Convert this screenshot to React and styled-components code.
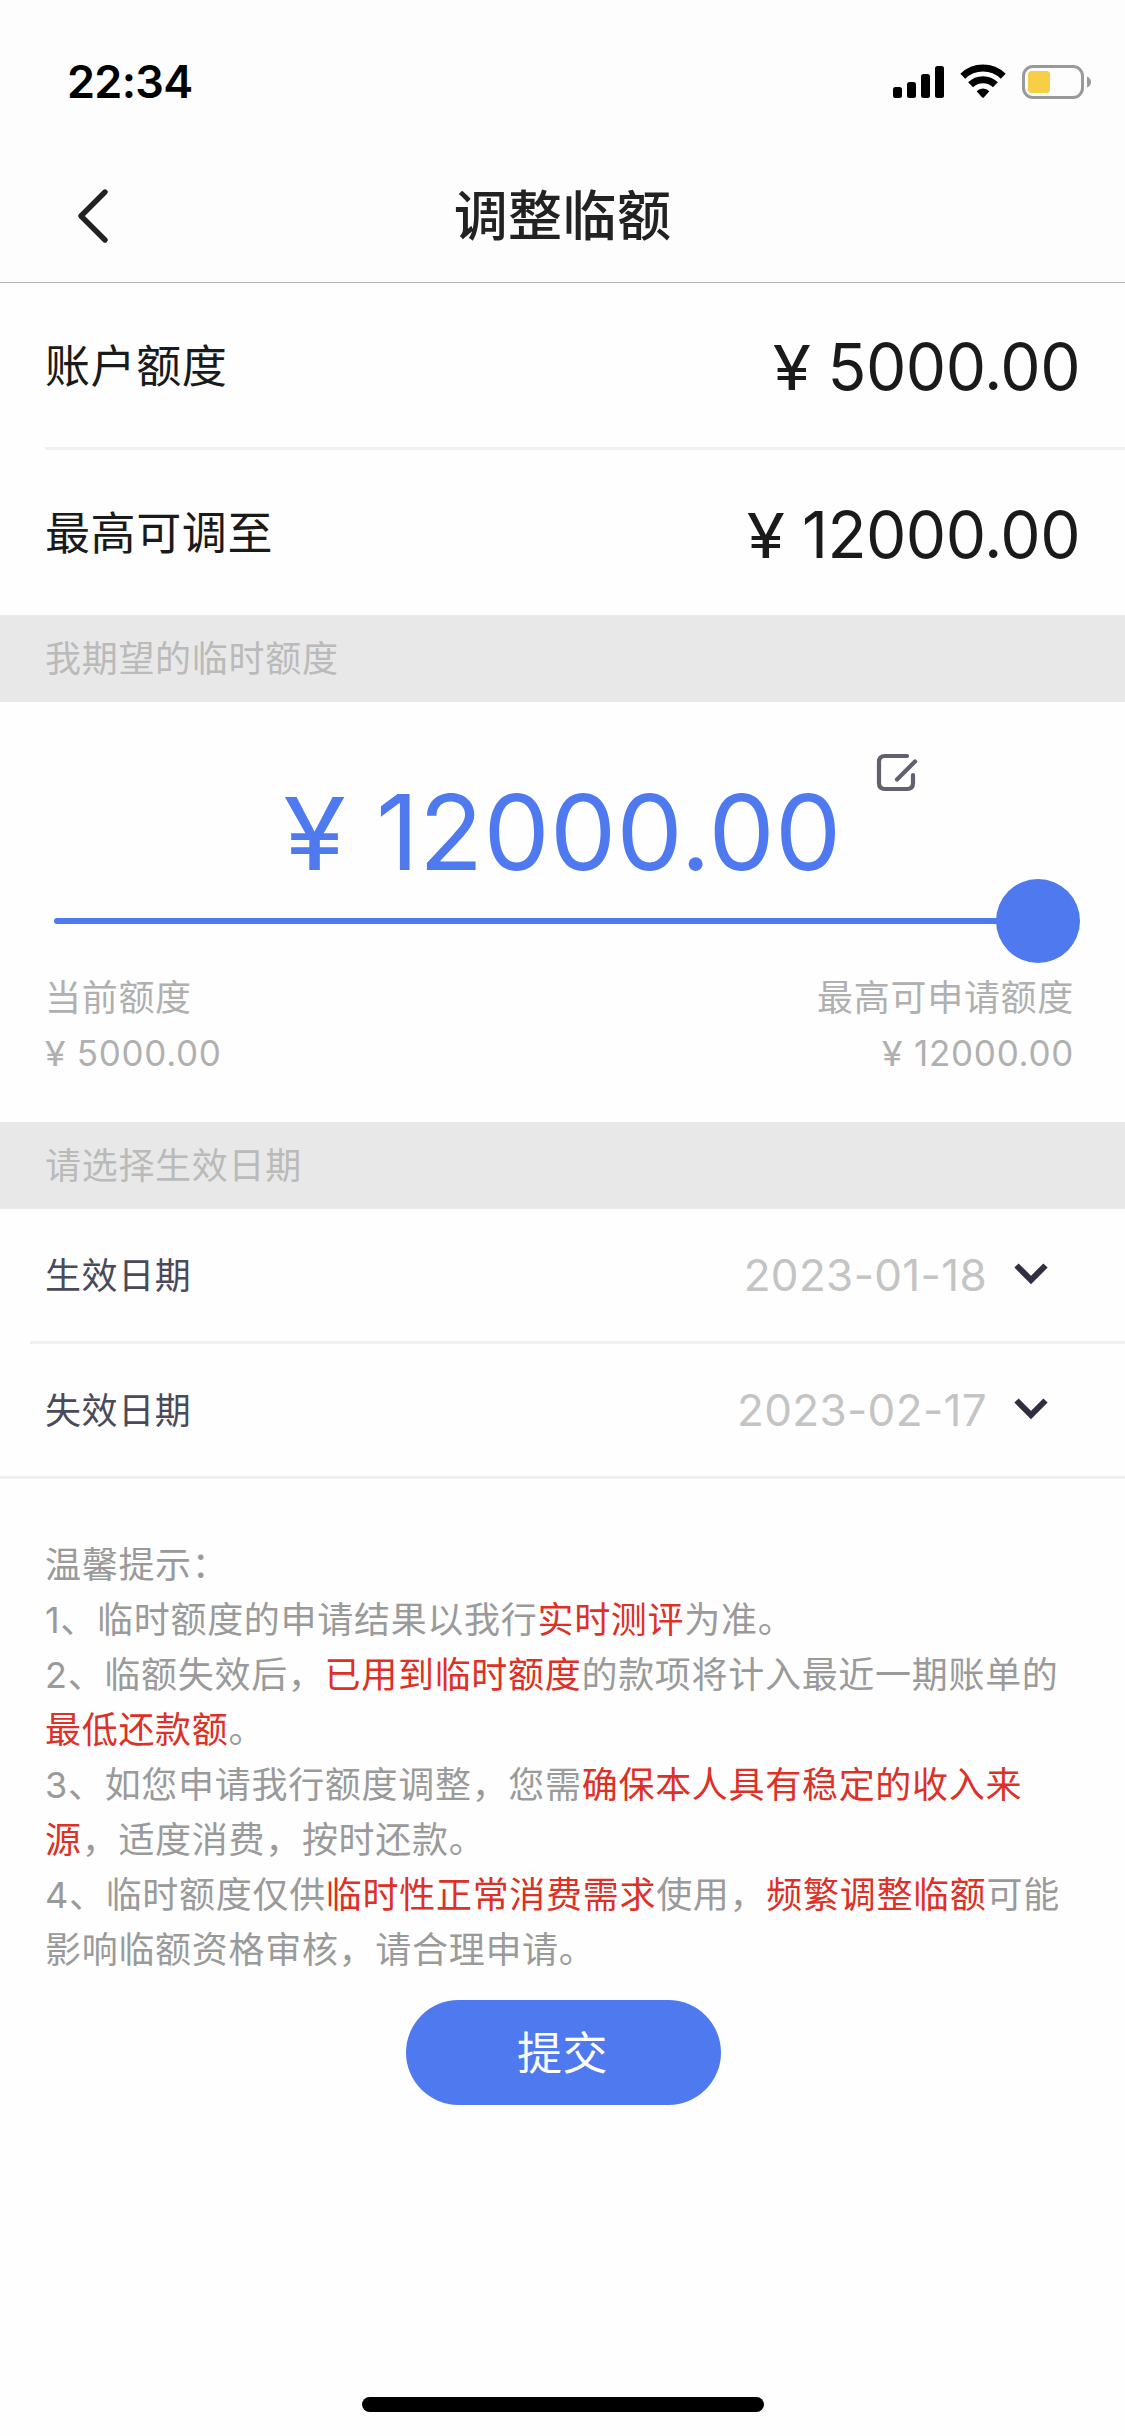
import React from "react";
import styled, { createGlobalStyle } from "styled-components";

const GlobalStyle = createGlobalStyle`
  * {
    box-sizing: border-box;
  }

  body {
    margin: 0;
    background: #fefefe;
    font-family: Inter, "Noto Sans CJK SC", sans-serif;
  }
`;

const Page = styled.div`
  display: flex;
  flex-direction: column;
  width: 1125px;
  height: 2436px;
  overflow: hidden;
`;

const StatusBar = styled.div`
  display: flex;
  align-items: center;
  justify-content: space-between;
  height: 132px;
  padding: 32px 33px 0 67px;
  background: #fdfdfd;
`;

const Time = styled.span`
  font-size: 45px;
  font-weight: 600;
  line-height: 54px;
  letter-spacing: -0.7px;
  color: #000;
`;

const NavBar = styled.header`
  display: grid;
  grid-template-columns: 160px 1fr 160px;
  align-items: center;
  height: 151px;
  padding-top: 18px;
  border-bottom: 1px solid #b2b2b2;
  background: #fdfdfd;
`;

const BackButton = styled.button`
  display: flex;
  width: 34px;
  margin-left: 76px;
  padding: 0;
  border: none;
  background: none;
`;

const Title = styled.h1`
  margin: 0;
  padding-top: 2px;
  font-size: 54px;
  font-weight: 500;
  line-height: 72px;
  letter-spacing: 0.4px;
  text-align: center;
  color: #222;
`;

const LimitRow = styled.div`
  display: flex;
  align-items: center;
  justify-content: space-between;
  height: ${({ $divider }) => ($divider ? "167px" : "165px")};
  margin-left: 45px;
  padding-right: 45px;
  border-bottom: ${({ $divider }) => ($divider ? "3px solid #f0f0f0" : "none")};
`;

const LimitLabel = styled.span`
  padding-bottom: 4px;
  font-size: 45px;
  letter-spacing: 0.6px;
  color: #1a1a1a;
`;

const LimitValue = styled.span`
  padding-top: 3px;
  font-size: 64px;
  letter-spacing: -0.5px;
  color: #1a1a1a;
`;

/* the currency sign is a little shorter and wider than the digits */
const Yen = styled.span`
  display: inline-block;
  margin-right: 0.03em;
  font-size: 0.96em;
  transform: scaleX(1.13);
`;

const SectionTitle = styled.div`
  display: flex;
  align-items: center;
  height: 87px;
  padding: 0 0 5px 45px;
  font-size: 36px;
  letter-spacing: 0.7px;
  color: #bababa;
  background: #e8e8e8;
`;

const Adjust = styled.section`
  display: flex;
  flex-direction: column;
  height: 420px;
  padding: 50px 45px 0;
`;

const Expected = styled.div`
  display: grid;
  grid-template-columns: 1fr auto 1fr;
  height: 127px;
`;

const ExpectedValue = styled.div`
  grid-column: 2;
  padding: 17px 0 0 4px;
  font-size: 105px;
  line-height: 125px;
  letter-spacing: 0.35px;
  white-space: nowrap;
  color: #4f79ef;
`;

const EditButton = styled.button`
  display: flex;
  align-self: start;
  margin-left: 34px;
  padding: 0;
  border: none;
  background: none;
`;

const Slider = styled.div`
  display: flex;
  align-items: center;
  height: 84px;
  padding-left: 9px;
`;

const Track = styled.div`
  flex: 1;
  height: 6px;
  margin-right: -10px;
  border-radius: 3px;
  background: #4f79ef;
`;

const Knob = styled.div`
  width: 84px;
  height: 84px;
  border-radius: 50%;
  background: #4f79ef;
`;

const Range = styled.div`
  display: flex;
  justify-content: space-between;
  padding: 8px 6px 0 0;
`;

const RangeEnd = styled.div`
  display: flex;
  flex-direction: column;
  text-align: ${({ $right }) => ($right ? "right" : "left")};
  font-size: 36px;
  line-height: 55px;
  letter-spacing: 0.7px;
  color: #b0b0b0;
`;

const RangeValue = styled.span`
  padding-left: 1px;
  font-size: 35px;
`;

const DateRow = styled.div`
  display: flex;
  align-items: center;
  justify-content: space-between;
  height: 135px;
  margin-left: ${({ $last }) => ($last ? "0" : "30px")};
  padding: 0 77px 0 ${({ $last }) => ($last ? "45px" : "15px")};
  border-bottom: 3px solid #f0f0f0;
`;

const DateLabel = styled.span`
  padding-bottom: 4px;
  font-size: 36px;
  letter-spacing: 0.6px;
  color: #4a4a5a;
`;

const DatePicker = styled.div`
  display: flex;
  align-items: center;
  gap: 27px;
  font-size: 44px;
  letter-spacing: 0.35px;
  color: #c4c4c4;

  svg {
    margin-bottom: 3px;
  }
`;

const Tips = styled.section`
  padding: 59px 45px 0;
  font-size: 36px;
  line-height: 55px;
  letter-spacing: 0.7px;
  color: #9a9a9a;

  p {
    margin: 0;
  }

  em {
    font-style: normal;
    color: #dd3026;
  }
`;

const SubmitButton = styled.button`
  align-self: center;
  width: 315px;
  height: 105px;
  margin: 22px 0 0 2px;
  padding: 0 2px 4px 0;
  border: none;
  border-radius: 53px;
  font-family: inherit;
  font-size: 45px;
  letter-spacing: 0.6px;
  color: #fff;
  background: #4f79ef;
`;

const HomeIndicator = styled.div`
  align-self: center;
  width: 402px;
  height: 15px;
  margin: auto 0 24px;
  border-radius: 8px;
  background: #000;
`;

const StatusIcons = () => (
  <svg width="200" height="36" viewBox="0 0 200 36">
    <rect x="1" y="23" width="9" height="11" rx="2.5" />
    <rect x="15" y="18" width="9" height="16" rx="2.5" />
    <rect x="29" y="10" width="9" height="24" rx="2.5" />
    <rect x="43" y="2" width="9" height="32" rx="2.5" />
    <g fill="none" stroke="#000" strokeWidth="7">
      <path d="M70.8 12.2A29 29 0 0 1 111.2 12.2" />
      <path d="M78.6 20.8A17.6 17.6 0 0 1 103.4 20.8" />
    </g>
    <path d="M84.6 27.2A9.2 9.2 0 0 1 97.4 27.2L92 33.2Q91 34.4 90 33.2Z" />
    <rect x="131.5" y="2.5" width="59" height="31" rx="9.5" fill="none" stroke="#999" strokeWidth="3" />
    <rect x="136" y="7" width="22" height="22" rx="3.5" fill="#f7ce46" />
    <path d="M195 12.5Q199 14 199 18T195 23.5Z" fill="#999" />
  </svg>
);

const BackIcon = () => (
  <svg width="34" height="58" viewBox="0 0 34 58" fill="none" stroke="#222" strokeWidth="5.4" strokeLinecap="round" strokeLinejoin="round">
    <path d="M29 5L5 29L29 53" />
  </svg>
);

const EditIcon = () => (
  <svg width="42" height="40" viewBox="0 0 42 40" fill="none" stroke="#62606f" strokeWidth="4.2" strokeLinecap="round">
    <path d="M31 4H9Q3 4 3 10V31Q3 37 9 37H31Q37 37 37 31V23" />
    <path d="M21 27.5L39 9.5" />
  </svg>
);

const ChevronIcon = () => (
  <svg width="34" height="24" viewBox="0 0 34 24" fill="none" stroke="#2f2f41" strokeWidth="6">
    <path d="M2.5 3.5L17 18L31.5 3.5" />
  </svg>
);

const Money = ({ value }) => (
  <>
    <Yen>¥</Yen> {value}
  </>
);

const App = () => {
  return (
    <Page>
      <GlobalStyle />
      <StatusBar>
        <Time>22:34</Time>
        <StatusIcons />
      </StatusBar>
      <NavBar>
        <BackButton>
          <BackIcon />
        </BackButton>
        <Title>调整临额</Title>
      </NavBar>

      <LimitRow $divider>
        <LimitLabel>账户额度</LimitLabel>
        <LimitValue>
          <Money value="5000.00" />
        </LimitValue>
      </LimitRow>
      <LimitRow>
        <LimitLabel>最高可调至</LimitLabel>
        <LimitValue>
          <Money value="12000.00" />
        </LimitValue>
      </LimitRow>

      <SectionTitle>我期望的临时额度</SectionTitle>
      <Adjust>
        <Expected>
          <ExpectedValue>
            <Money value="12000.00" />
          </ExpectedValue>
          <EditButton>
            <EditIcon />
          </EditButton>
        </Expected>
        <Slider>
          <Track />
          <Knob />
        </Slider>
        <Range>
          <RangeEnd>
            <span>当前额度</span>
            <RangeValue>
              <Money value="5000.00" />
            </RangeValue>
          </RangeEnd>
          <RangeEnd $right>
            <span>最高可申请额度</span>
            <RangeValue>
              <Money value="12000.00" />
            </RangeValue>
          </RangeEnd>
        </Range>
      </Adjust>

      <SectionTitle>请选择生效日期</SectionTitle>
      <DateRow>
        <DateLabel>生效日期</DateLabel>
        <DatePicker>
          2023-01-18
          <ChevronIcon />
        </DatePicker>
      </DateRow>
      <DateRow $last>
        <DateLabel>失效日期</DateLabel>
        <DatePicker>
          2023-02-17
          <ChevronIcon />
        </DatePicker>
      </DateRow>

      <Tips>
        <p>温馨提示：</p>
        <p>
          1、临时额度的申请结果以我行<em>实时测评</em>为准。
        </p>
        <p>
          2、临额失效后，<em>已用到临时额度</em>的款项将计入最近一期账单的<em>最低还款额</em>。
        </p>
        <p>
          3、如您申请我行额度调整，您需<em>确保本人具有稳定的收入来源</em>，适度消费，按时还款。
        </p>
        <p>
          4、临时额度仅供<em>临时性正常消费需求</em>使用，<em>频繁调整临额</em>可能影响临额资格审核，请合理申请。
        </p>
      </Tips>
      <SubmitButton>提交</SubmitButton>
      <HomeIndicator />
    </Page>
  );
};

export default App;
